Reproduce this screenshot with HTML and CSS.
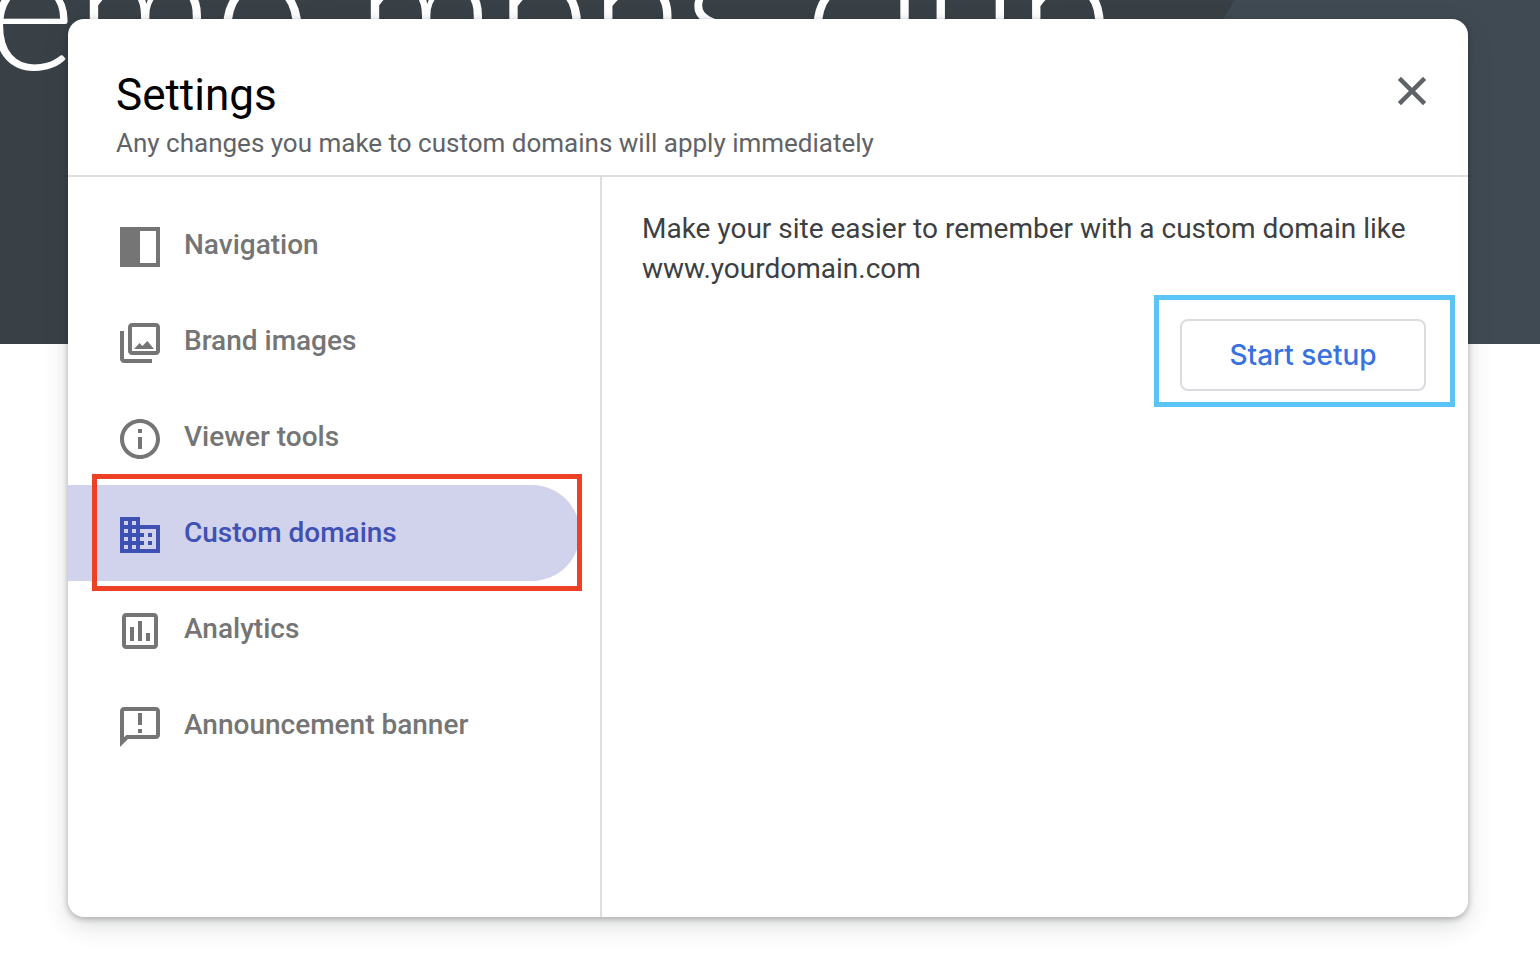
FILE: index.html
```html
<!DOCTYPE html>
<html lang="en">
<head>
<meta charset="utf-8">
<meta name="viewport" content="width=device-width, initial-scale=1">
<title>Settings</title>
<link rel="stylesheet" href="styles.css">
</head>
<body>
<div class="page">
  <header class="banner">
    <p class="site-name">emo mbns club</p>
  </header>
  <section class="dialog" role="dialog" aria-labelledby="dialog-title">
    <header class="dialog-header">
      <div class="heading">
        <h1 class="title" id="dialog-title">Settings</h1>
        <p class="subtitle">Any changes you make to custom domains will apply immediately</p>
      </div>
      <button class="close" type="button" aria-label="Close">
        <svg class="icon" viewBox="0 0 24 24" aria-hidden="true"><path d="M5.700 5.700 18.300 18.300M18.300 5.700 5.700 18.300" fill="none" stroke="currentColor" stroke-width="2.200"/></svg>
      </button>
    </header>
    <div class="dialog-body">
      <nav class="sidebar" aria-label="Settings sections">
        <a class="item" href="#navigation">
          <svg class="icon" viewBox="0 0 24 24" aria-hidden="true"><path fill-rule="evenodd" d="M2 2h20v20H2zM12 4v16h8V4z"/></svg>
          <span class="label">Navigation</span>
        </a>
        <a class="item" href="#brand-images">
          <svg class="icon" viewBox="0 0 24 24" aria-hidden="true"><path d="M20 4v12H8V4h12m0-2H8c-1.100 0-2 .9-2 2v12c0 1.100.9 2 2 2h12c1.100 0 2-.9 2-2V4c0-1.100-.9-2-2-2zM9 15h10l-3.300-4-2.500 2.500L11.800 12zM2 6v14c0 1.100.9 2 2 2h14v-2H4V6H2z"/></svg>
          <span class="label">Brand images</span>
        </a>
        <a class="item" href="#viewer-tools">
          <svg class="icon" viewBox="0 0 24 24" aria-hidden="true"><path d="M11 7h2v2h-2zm0 4h2v6h-2zm1-9C6.480 2 2 6.480 2 12s4.480 10 10 10 10-4.480 10-10S17.520 2 12 2zm0 18c-4.410 0-8-3.590-8-8s3.590-8 8-8 8 3.590 8 8-3.590 8-8 8z"/></svg>
          <span class="label">Viewer tools</span>
        </a>
        <a class="item item-selected" href="#custom-domains" aria-current="page">
          <svg class="icon" viewBox="0 0 24 24" aria-hidden="true"><path d="M12 7V3H2v18h20V7H12zM6 19H4v-2h2v2zm0-4H4v-2h2v2zm0-4H4V9h2v2zm0-4H4V5h2v2zm4 12H8v-2h2v2zm0-4H8v-2h2v2zm0-4H8V9h2v2zm0-4H8V5h2v2zm10 12h-8v-2h2v-2h-2v-2h2v-2h-2V9h8v10zm-2-8h-2v2h2v-2zm0 4h-2v2h2v-2z"/></svg>
          <span class="label">Custom domains</span>
          <span class="mark mark-red"></span>
        </a>
        <a class="item" href="#analytics">
          <svg class="icon" viewBox="0 0 24 24" aria-hidden="true"><path d="M19 3H5c-1.100 0-2 .9-2 2v14c0 1.100.9 2 2 2h14c1.100 0 2-.9 2-2V5c0-1.100-.9-2-2-2zm0 16H5V5h14v14zM7 10h2v7H7zm4-3h2v10h-2zm4 6h2v4h-2z"/></svg>
          <span class="label">Analytics</span>
        </a>
        <a class="item" href="#announcement-banner">
          <svg class="icon" viewBox="0 0 24 24" aria-hidden="true"><path d="M20 2H4c-1.100 0-2 .9-2 2v18l4-4h14c1.100 0 2-.9 2-2V4c0-1.100-.9-2-2-2zm0 14H5.170L4 17.170V4h16v12zM11 5h2v6h-2zm0 8h2v2h-2z"/></svg>
          <span class="label">Announcement banner</span>
        </a>
      </nav>
      <main class="content">
        <p class="intro">Make your site easier to remember with a custom domain like www.yourdomain.com</p>
        <div class="actions">
          <button class="setup" type="button">Start setup<span class="mark mark-blue"></span></button>
        </div>
      </main>
    </div>
  </section>
</div>
</body>
</html>
```

FILE: styles.css
```css
* {
  box-sizing: border-box;
}

body {
  margin: 0;
  background: #fff;
  font-family: Roboto, "Liberation Sans", sans-serif;
}

h1,
p {
  margin: 0;
  font-weight: 400;
}

.page {
  display: grid;
  grid-template-columns: minmax(0, 1fr);
  min-height: 100vh;
  overflow: hidden;
}

.banner,
.dialog {
  grid-area: 1 / 1;
}

.banner {
  display: flex;
  align-items: flex-start;
  height: 344px;
  overflow: hidden;
  background: linear-gradient(120deg, #394046 0%, #394045 71%, #3f4a52 71%, #3f4a52 100%);
}

.site-name {
  margin: -108px 0 0 -14px;
  color: #fff;
  font-family: Lato, "Open Sans", sans-serif;
  font-size: 172px;
  font-weight: 300;
  line-height: 224px;
  white-space: nowrap;
}

.dialog {
  display: flex;
  flex-direction: column;
  margin: 19px 72px 43px 68px;
  border-radius: 16px;
  background: #fff;
  box-shadow: 0 8px 24px rgba(60, 64, 67, 0.18), 0 2px 6px rgba(0, 0, 0, 0.28);
}

.dialog-header {
  display: flex;
  justify-content: space-between;
  align-items: flex-start;
  padding: 48px 32px 12px 48px;
  border-bottom: 2px solid #dedede;
}

.title {
  color: #000;
  font-size: 44px;
  line-height: 56px;
}

.subtitle {
  color: #5f6368;
  font-size: 26px;
  line-height: 40px;
}

.close {
  display: flex;
  padding: 0;
  border: 0;
  background: none;
  color: #5f6368;
}

.icon {
  flex: none;
  width: 48px;
  height: 48px;
  fill: currentColor;
}

.dialog-body {
  display: flex;
  flex: 1;
}

.sidebar {
  flex: 0 1 534px;
  padding: 20px 20px 20px 0;
  border-right: 2px solid #dedede;
}

.item {
  position: relative;
  display: flex;
  align-items: center;
  gap: 20px;
  height: 96px;
  padding: 4px 48px 0;
  border-radius: 0 48px 48px 0;
  color: #757575;
  text-decoration: none;
}

.label {
  padding-bottom: 4px;
  font-size: 28px;
  font-weight: 500;
  line-height: 40px;
}

.item-selected {
  background: #d1d2ec;
  color: #3f51b5;
}

.mark {
  position: absolute;
  border: 5px solid;
  pointer-events: none;
}

.mark-red {
  inset: -11px -2px -10px 24px;
  border-color: #ed4024;
}

.mark-blue {
  inset: -26px -31px -18px -28px;
  border-color: #5bc4f7;
}

.content {
  flex: 1;
  padding: 32px 40px;
}

.intro {
  color: #3c4043;
  font-size: 28px;
  line-height: 40px;
}

.actions {
  display: flex;
  justify-content: flex-end;
  padding: 30px 2px 0 0;
}

.setup {
  position: relative;
  min-width: 246px;
  height: 72px;
  padding: 0 40px;
  border: 2px solid #dadce0;
  border-radius: 8px;
  background: #fff;
  color: #3871e0;
  font-family: Inter, Roboto, sans-serif;
  font-size: 28px;
  font-weight: 500;
}
```
